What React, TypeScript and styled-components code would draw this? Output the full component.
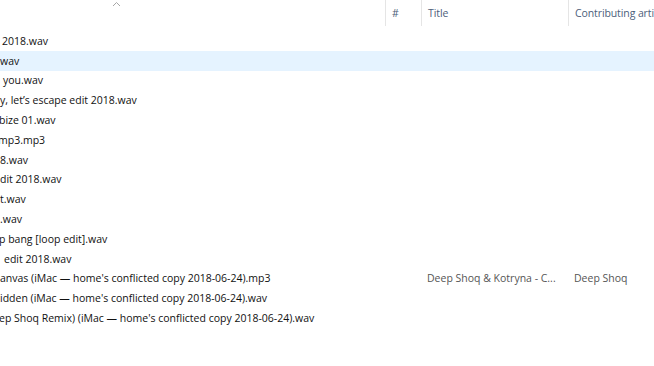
import styled, { createGlobalStyle } from "styled-components";

const GlobalStyle = createGlobalStyle`
  html, body {
    margin: 0;
    padding: 0;
    background: #ffffff;
    overflow: hidden;
  }
`

const StyledView = styled.div`
  width: 654px;
  height: 366px;
  font-family: "Open Sans", "Noto Sans", sans-serif;
  font-size: 10.5px;
  background: #ffffff;
  overflow: hidden;
`
const StyledHeader = styled.div`
  display: grid;
  grid-template-columns: 385px 36px 147px 1fr;
  height: 31px;
`
const StyledHeadCell = styled.div<{ $first?: boolean }>`
  position: relative;
  display: flex;
  align-items: center;
  height: 26px;
  padding-left: 6px;
  color: #4c607a;
  white-space: nowrap;
  overflow: hidden;
  letter-spacing: -0.1px;
  border-left: ${(p) => (p.$first ? "none" : "1px solid #e5e5e5")};
`
const StyledSortArrow = styled.svg`
  position: absolute;
  left: 112px;
  top: 1px;
`
const StyledRow = styled.div<{ $selected?: boolean }>`
  display: grid;
  grid-template-columns: 385px 36px 147px 1fr;
  align-items: center;
  height: 19.8px;
  background: ${(p) => (p.$selected ? "#e5f3ff" : "transparent")};
`
const StyledName = styled.div`
  color: #111111;
  white-space: nowrap;
  overflow: hidden;
`
const StyledCell = styled.div`
  padding-left: 6px;
  color: #555555;
  white-space: nowrap;
  overflow: hidden;
`

type Track = {
  name: string;
  indent: number;
  title?: string;
  artist?: string;
}

const tracks: Track[] = [
  { name: "2018.wav", indent: 2 },
  { name: "wav", indent: 0 },
  { name: "you.wav", indent: 3 },
  { name: "y, let’s escape edit 2018.wav", indent: 0 },
  { name: "bize 01.wav", indent: -1 },
  { name: "mp3.mp3", indent: -2 },
  { name: "8.wav", indent: 0 },
  { name: "dit 2018.wav", indent: 0 },
  { name: "t.wav", indent: 0 },
  { name: ".wav", indent: 0 },
  { name: "p bang [loop edit].wav", indent: -1 },
  { name: "edit 2018.wav", indent: 4 },
  { name: "anvas (iMac — home's conflicted copy 2018-06-24).mp3", indent: 0, title: "Deep Shoq & Kotryna - C...", artist: "Deep Shoq" },
  { name: "idden (iMac — home's conflicted copy 2018-06-24).wav", indent: 0 },
  { name: "ep Shoq Remix) (iMac — home's conflicted copy 2018-06-24).wav", indent: -1 },
]

export default function App() {
  return (
    <>
      <GlobalStyle />
      <StyledView>
        <StyledHeader>
          <StyledHeadCell $first>
            <StyledSortArrow width="9" height="6" viewBox="0 0 9 6">
              <path d="M1 5 L4.5 1.5 L8 5" fill="none" stroke="#a6a6a6" strokeWidth="1" />
            </StyledSortArrow>
          </StyledHeadCell>
          <StyledHeadCell>#</StyledHeadCell>
          <StyledHeadCell>Title</StyledHeadCell>
          <StyledHeadCell>Contributing artists</StyledHeadCell>
        </StyledHeader>
        {tracks.map((t, i) => (
          <StyledRow key={i} $selected={i === 1}>
            <StyledName>
              <span style={{ marginLeft: t.indent }}>{t.name}</span>
            </StyledName>
            <StyledCell></StyledCell>
            <StyledCell>{t.title}</StyledCell>
            <StyledCell>{t.artist}</StyledCell>
          </StyledRow>
        ))}
      </StyledView>
    </>
  )
}
